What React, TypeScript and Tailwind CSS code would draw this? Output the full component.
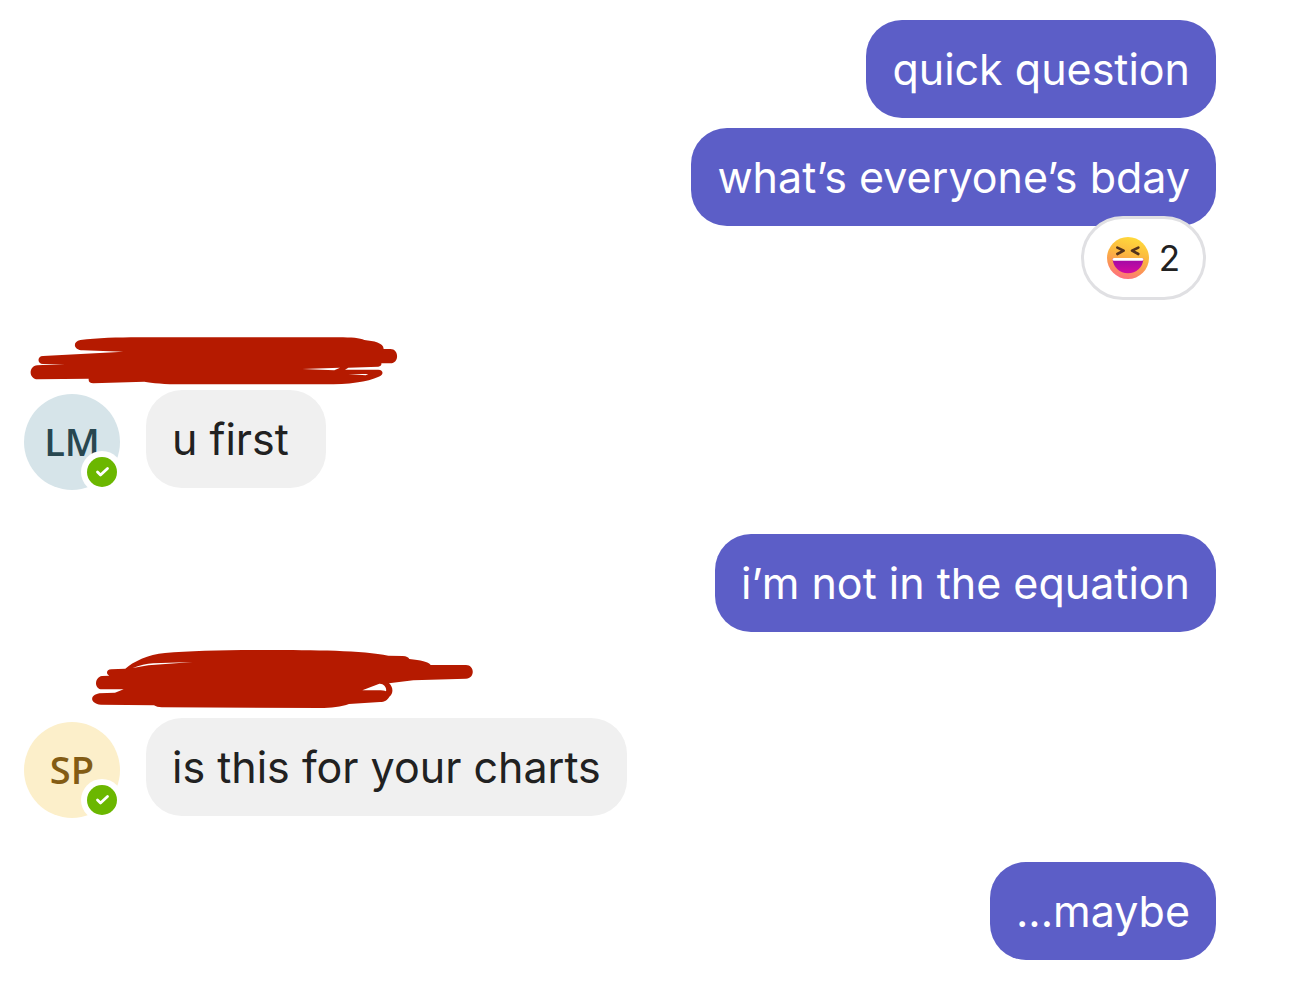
import type { ReactNode } from 'react';
import clsx from 'clsx';

interface BubbleProps {
  own?: boolean;
  children: ReactNode;
}

function Bubble({ own, children }: BubbleProps) {
  return (
    <p
      className={clsx(
        'min-w-[180px] rounded-[36px] px-[26px] py-[22px] text-[43px] leading-[54px]',
        own ? 'self-end bg-[#5c5ec7] text-white' : 'bg-[#f0f0f0] text-[#212121]',
      )}
    >
      {children}
    </p>
  );
}

function LaughIcon() {
  return (
    <svg className="size-[42px] shrink-0" viewBox="0 0 126 126" role="img" aria-label="Laugh">
      <defs>
        <linearGradient id="face" x1="0.7" y1="0" x2="0.4" y2="1">
          <stop offset="0" stopColor="#ffdc3a" />
          <stop offset="0.45" stopColor="#fbb540" />
          <stop offset="0.75" stopColor="#fb9358" />
          <stop offset="1" stopColor="#ff6f80" />
        </linearGradient>
        <linearGradient id="mouth" x1="0" y1="0" x2="0" y2="1">
          <stop offset="0" stopColor="#9b0aa6" />
          <stop offset="1" stopColor="#d40aa0" />
        </linearGradient>
      </defs>
      <circle cx="63" cy="63" r="63" fill="url(#face)" />
      <path
        d="M31 32 L50 41 L31 51 M94 32 L75 41 L94 51"
        fill="none"
        stroke="#54331c"
        strokeWidth="8"
        strokeLinecap="round"
        strokeLinejoin="round"
      />
      <path d="M17 67 Q17 63 22 63 H104 Q109 63 109 67 C107 92 88 109 63 109 C38 109 19 92 17 67 Z" fill="url(#mouth)" />
      <path d="M17 67 Q17 63 22 63 H104 Q109 63 109 67 L107 71 H19 Z" fill="#fff" />
    </svg>
  );
}

interface AvatarProps {
  initials: string;
  className: string;
}

function Avatar({ initials, className }: AvatarProps) {
  return (
    <div
      className={clsx(
        "relative mt-1 flex size-24 shrink-0 items-center justify-center rounded-full pb-[3px] font-['Open_Sans','Noto_Sans',sans-serif] text-[38px] leading-none font-semibold",
        className,
      )}
    >
      {initials}
      <span className="absolute right-[-3px] bottom-[-3px] flex size-[42px] items-center justify-center rounded-full bg-white">
        <svg className="size-[30px]" viewBox="0 0 30 30" role="img" aria-label="Available">
          <circle cx="15" cy="15" r="15" fill="#6bb700" />
          <path
            d="M10.5 15 L13.5 18 L20.5 11.5"
            fill="none"
            stroke="#fff"
            strokeWidth="2.8"
            strokeLinecap="round"
            strokeLinejoin="round"
          />
        </svg>
      </span>
    </div>
  );
}

function WideScribble() {
  return (
    <svg className="mt-9 h-[50px] w-[380px]" viewBox="27 33 1140 150" aria-hidden="true">
      <path
        fill="#b51a00"
        d="M196 45 C245 39 310 37 370 37 H970 C1010 37 1035 39 1048 45 C1076 48 1106 53 1106 72 H1126 C1153 72 1153 115 1126 115 H1099 C1100 120 1097 124 1090 125 L1000 128 L990 134 L1090 134 C1107 135 1106 151 1091 155 C1058 171 1000 178 930 178 H500 C450 178 410 174 388 170 L235 175 C224 175 220 170 221 161 L68 163 C40 162 40 124 67 121 L150 117 H84 C66 117 66 93 84 93 L325 80 L204 76 C174 76 172 49 196 45 Z"
      />
      <path fill="#fff" d="M862 132 L975 128 L958 136 Z M1000 147 L1060 147 L1052 151 Z" />
    </svg>
  );
}

function LoopScribble() {
  return (
    <svg className="mt-4 ml-[60px] h-[62px] w-[396px]" viewBox="12 24 1188 186" aria-hidden="true">
      <path
        fill="#b51a00"
        d="M66 108 L88 107 C77 102 79 88 94 88 L136 86 C158 66 205 43 255 39 C330 32 430 30 560 30 C700 30 850 31 925 47 L968 48 C980 49 985 52 988 57 C1022 61 1045 65 1052 75 H1158 C1185 75 1185 116 1158 116 L1000 121 L927 130 C941 142 940 162 928 170 C922 181 914 185 900 186 L807 192 C785 200 752 204 720 204 L245 202 C235 202 228 199 222 196 L63 194 C29 190 28 166 58 160 L105 158 L131 148 H66 C42 148 42 112 66 108 Z"
      />
      <path fill="#fff" d="M158 84 C178 77 200 71 220 70 L338 66 L205 76 Z M847 151 L898 131 C912 130 921 143 918 154 C910 149 895 151 847 151 Z" />
    </svg>
  );
}

export default function App() {
  return (
    <main className="flex flex-col bg-white pt-5 pr-[74px] pb-6 pl-6 font-['Inter','Liberation_Sans',sans-serif]">
      <div className="flex flex-col gap-[10px]">
        <Bubble own>quick question</Bubble>
        <Bubble own>what’s everyone’s bday</Bubble>
      </div>
      <button
        type="button"
        className="relative mt-[-10px] mr-[10px] flex h-[84px] items-center gap-[10px] self-end rounded-full border-3 border-[#e0e0e3] bg-white px-[23px] text-[35px] text-[#212121]"
      >
        <LaughIcon />
        <span>2</span>
      </button>

      <WideScribble />
      <div className="mt-1 flex items-start gap-[26px]">
        <Avatar initials="LM" className="bg-[#d6e4e9] text-[#284750]" />
        <Bubble>u first</Bubble>
      </div>

      <div className="mt-11 flex flex-col">
        <Bubble own>i’m not in the equation</Bubble>
      </div>

      <LoopScribble />
      <div className="mt-2 flex items-start gap-[26px]">
        <Avatar initials="SP" className="bg-[#fcefca] text-[#835c14]" />
        <Bubble>is this for your charts</Bubble>
      </div>

      <div className="mt-11 flex flex-col">
        <Bubble own>...maybe</Bubble>
      </div>
    </main>
  );
}
